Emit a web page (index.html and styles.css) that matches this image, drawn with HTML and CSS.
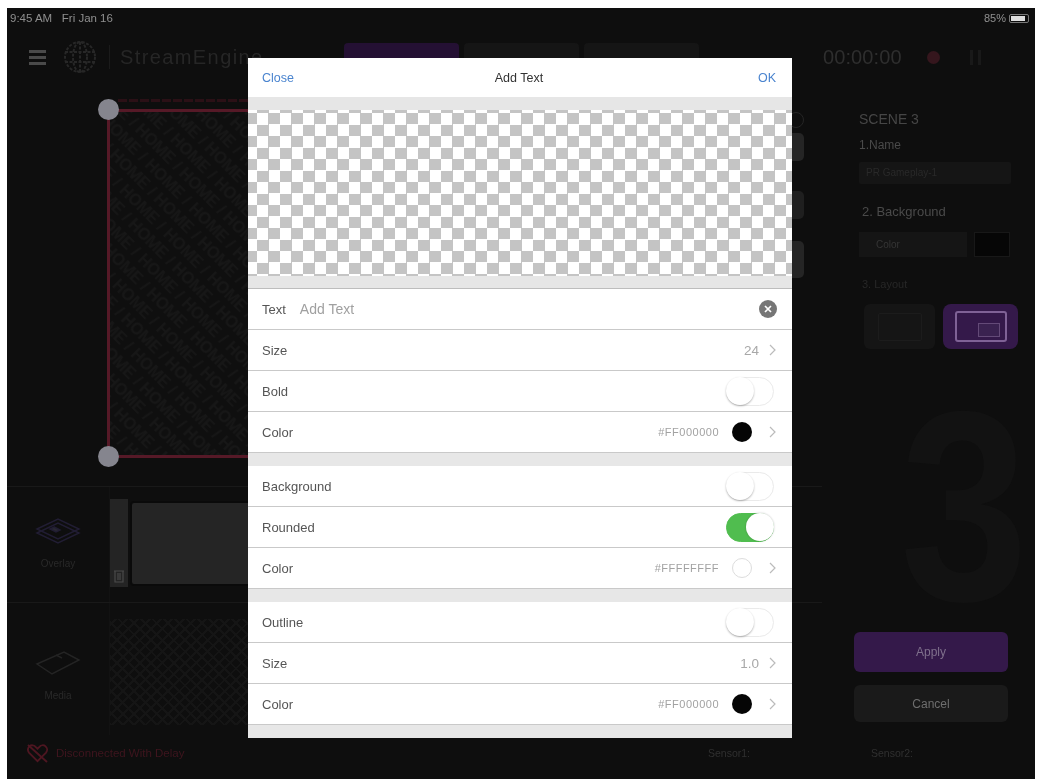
FILE: index.html
```html
<!DOCTYPE html>
<html lang="en">
<head>
<meta charset="utf-8">
<title>StreamEngine - Add Text</title>
<link rel="stylesheet" href="styles.css">
</head>
<body>
<div class="screen">
  <header class="status">
    <span>9:45 AM&nbsp;&nbsp;&nbsp;Fri Jan 16</span>
    <span class="battery">85% <i class="batt"><b></b></i></span>
  </header>

  <nav class="topbar">
    <div class="burger"><i></i><i></i><i></i></div>
    <svg class="logo" viewBox="0 0 40 34" aria-hidden="true"><g fill="none" stroke="#272727" stroke-width="2"><circle cx="20" cy="17" r="15" stroke-dasharray="3 1.5"/><ellipse cx="20" cy="17" rx="7" ry="15" stroke-dasharray="3 1.5"/><path d="M5 12h30M5 22h30M20 2v30" stroke-dasharray="3 1.5"/></g></svg>
    <span class="divider"></span>
    <span class="brand">StreamEngine</span>
    <div class="tabs">
      <span class="tab tab-on"></span>
      <span class="tab"></span>
      <span class="tab"></span>
    </div>
    <span class="timer">00:00:00</span>
    <span class="rec"></span>
    <span class="pause"><i></i><i></i></span>
  </nav>

  <div class="body">
    <main class="work">
      <section class="stage">
        <div class="canvas">
          <svg class="pattern" aria-hidden="true">
            <defs>
              <pattern id="home" width="62" height="36" patternUnits="userSpaceOnUse" patternTransform="rotate(45)">
                <text x="0" y="14" class="home-text">HOME /</text>
                <text x="-31" y="32" class="home-text">HOME / HOME</text>
              </pattern>
            </defs>
            <rect width="100%" height="100%" fill="url(#home)"/>
          </svg>
          <span class="caption"></span>
          <span class="handle handle-top"></span>
          <span class="handle handle-bottom"></span>
        </div>
        <div class="tools">
          <span class="tool-dot"></span>
          <span class="tool tool-a"></span>
          <span class="tool tool-b"></span>
          <span class="tool tool-c"></span>
        </div>
      </section>

      <section class="track">
        <div class="track-label">
          <svg class="track-icon" viewBox="0 0 48 28" aria-hidden="true"><g fill="none" stroke="#211d33" stroke-width="1.5"><path d="M3 16 24 6l21 10-21 10z"/><path d="M3 12 24 2l21 10-21 10z"/><path d="m20 10 6 3-4 2-6-3z" fill="#292932"/></g></svg>
          <span>Overlay</span>
        </div>
        <div class="strip"><svg class="trash" viewBox="0 0 12 14" aria-hidden="true"><path d="M1 2h10M2 2v11h8V2M5 4v7M7 4v7" fill="none" stroke="#4a4a4a" stroke-width="1.2"/></svg></div>
        <div class="tile"></div>
      </section>

      <section class="track track-media">
        <div class="track-label">
          <svg class="track-icon" viewBox="0 0 48 28" aria-hidden="true"><g fill="none" stroke="#242424" stroke-width="1.5"><path d="M3 15 30 3l15 8-27 14z"/><path d="m22 6 6 3"/></g></svg>
          <span>Media</span>
        </div>
        <div class="hatch"></div>
        <div class="side-panel"><span class="chev-dot"><svg viewBox="0 0 10 6" aria-hidden="true"><path d="m1 1 4 4 4-4" fill="none" stroke="#222" stroke-width="1.5"/></svg></span></div>
      </section>
    </main>

    <aside class="panel">
      <h2>SCENE 3</h2>
      <label class="lbl">1.Name</label>
      <div class="input">PR Gameplay-1</div>
      <label class="lbl lbl-bg">2. Background</label>
      <div class="bg-row">
        <div class="select">Color</div>
        <div class="swatch"></div>
      </div>
      <label class="lbl lbl-dim">3. Layout</label>
      <div class="layouts">
        <div class="layout"><span class="lay-box"></span></div>
        <div class="layout layout-on"><span class="lay-box lay-pip"><i></i></span></div>
      </div>
      <div class="big3">3</div>
      <button class="btn btn-apply">Apply</button>
      <button class="btn btn-cancel">Cancel</button>
    </aside>
  </div>

  <footer class="bottom">
    <svg class="noconn" viewBox="0 0 24 20" aria-hidden="true"><g fill="none" stroke="#4e1621" stroke-width="2"><path d="M12 18 3 9a4.5 4.5 0 0 1 7-6l2 2 2-2a4.5 4.5 0 0 1 7 6z"/><path d="M2 1l20 18"/></g></svg>
    <span class="disc">Disconnected With Delay</span>
    <span class="sensor">Sensor1:</span>
    <span class="sensor">Sensor2:</span>
  </footer>

  <div class="modal">
    <div class="m-head">
      <span class="link">Close</span>
      <span class="m-title">Add Text</span>
      <span class="link link-end">OK</span>
    </div>
    <div class="band"></div>
    <div class="checker"></div>
    <div class="band band-b"></div>

    <div class="group">
      <div class="row">
        <span class="name">Text</span><span class="placeholder">Add Text</span>
        <span class="end"><span class="clear"><svg viewBox="0 0 10 10" aria-hidden="true"><path d="m2 2 6 6M8 2 2 8" stroke="#fff" stroke-width="1.7"/></svg></span></span>
      </div>
      <div class="row"><span class="name">Size</span><span class="end"><span class="val">24</span><svg class="chev" viewBox="0 0 7 12" aria-hidden="true"><path d="m1 1 5 5-5 5" fill="none" stroke="#bbb" stroke-width="1.2"/></svg></span></div>
      <div class="row"><span class="name">Bold</span><span class="end"><span class="toggle"></span></span></div>
      <div class="row"><span class="name">Color</span><span class="end"><span class="hex">#FF000000</span><span class="dot"></span><svg class="chev" viewBox="0 0 7 12" aria-hidden="true"><path d="m1 1 5 5-5 5" fill="none" stroke="#bbb" stroke-width="1.2"/></svg></span></div>
    </div>
    <div class="gap"></div>
    <div class="group">
      <div class="row"><span class="name">Background</span><span class="end"><span class="toggle"></span></span></div>
      <div class="row"><span class="name">Rounded</span><span class="end"><span class="toggle toggle-on"></span></span></div>
      <div class="row"><span class="name">Color</span><span class="end"><span class="hex">#FFFFFFFF</span><span class="dot dot-white"></span><svg class="chev" viewBox="0 0 7 12" aria-hidden="true"><path d="m1 1 5 5-5 5" fill="none" stroke="#bbb" stroke-width="1.2"/></svg></span></div>
    </div>
    <div class="gap"></div>
    <div class="group">
      <div class="row"><span class="name">Outline</span><span class="end"><span class="toggle"></span></span></div>
      <div class="row"><span class="name">Size</span><span class="end"><span class="val">1.0</span><svg class="chev" viewBox="0 0 7 12" aria-hidden="true"><path d="m1 1 5 5-5 5" fill="none" stroke="#bbb" stroke-width="1.2"/></svg></span></div>
      <div class="row"><span class="name">Color</span><span class="end"><span class="hex">#FF000000</span><span class="dot"></span><svg class="chev" viewBox="0 0 7 12" aria-hidden="true"><path d="m1 1 5 5-5 5" fill="none" stroke="#bbb" stroke-width="1.2"/></svg></span></div>
    </div>
    <div class="gap gap-end"></div>
  </div>
</div>
</body>
</html>
```
FILE: styles.css
```css
* { box-sizing: border-box; }
html, body { margin: 0; padding: 0; background: #fff; overflow: hidden; }
body { width: 1040px; height: 782px; font-family: "Liberation Sans", Arial, sans-serif; }

.screen {
  position: relative;
  width: 1028px;
  height: 771px;
  margin: 8px 0 0 7px;
  background: #0e0e0e;
  display: flex;
  flex-direction: column;
  color: #444;
  overflow: hidden;
  filter: blur(.5px);
}

/* status bar */
.status {
  flex: none;
  height: 20px;
  padding: 0 6px 0 3px;
  display: flex;
  justify-content: space-between;
  align-items: center;
  font-size: 11.5px;
  color: #8f8f8f;
}
.battery { display: flex; align-items: center; gap: 3px; font-size: 11px; }
.batt { width: 20px; height: 9px; border: 1px solid #777; border-radius: 2px; padding: 1px; display: block; }
.batt b { display: block; width: 85%; height: 100%; background: #ddd; }

/* top bar */
.topbar {
  flex: none;
  height: 58px;
  padding-left: 22px;
  display: flex;
  align-items: center;
}
.burger { width: 17px; display: flex; flex-direction: column; gap: 3px; }
.burger i { display: block; height: 3px; background: #4a4a4a; }
.logo { width: 40px; height: 34px; margin-left: 14px; }
.divider { width: 1px; height: 24px; margin-left: 9px; background: #1b1b1b; }
.brand { width: 224px; margin-left: 10px; font-size: 20px; letter-spacing: 1.4px; color: #262626; white-space: nowrap; }
.tabs { display: flex; gap: 5px; width: 364px; }
.tab { width: 115px; height: 28px; background: #151515; border-radius: 4px 4px 0 0; }
.tab-on { background: #241033; }
.timer { margin-left: 115px; font-size: 20px; color: #2e2e2e; letter-spacing: .1px; }
.rec { width: 13px; height: 13px; margin-left: 25px; border-radius: 50%; background: #35161d; }
.pause { display: flex; gap: 5px; margin-left: 30px; }
.pause i { display: block; width: 3px; height: 15px; background: #191919; }

/* body */
.body { flex: 1; min-height: 0; display: flex; }
.work { flex: none; width: 815px; display: flex; flex-direction: column; }

.stage {
  flex: none;
  height: 401px;
  padding: 23px 0 0 100px;
  display: flex;
  border-bottom: 1px solid #191919;
}
.canvas {
  position: relative;
  flex: none;
  width: 680px;
  height: 349px;
  border: 3px solid #561927;
  background: #0f0f0f;
}
.pattern { position: absolute; inset: 0; width: 100%; height: 100%; }
.home-text { font: 700 16px "Liberation Sans", Arial, sans-serif; fill: #171717; }
.caption {
  position: absolute;
  left: 8px;
  top: -13px;
  width: 130px;
  height: 3px;
  background: repeating-linear-gradient(90deg, #2b1016 0 9px, transparent 9px 11px);
}
.handle {
  position: absolute;
  left: -12px;
  width: 21px;
  height: 21px;
  border-radius: 50%;
  background: #85858e;
}
.handle-top { top: -13px; }
.handle-bottom { bottom: -12px; }

.tools { flex: none; width: 14px; margin-left: 5px; display: flex; flex-direction: column; align-items: flex-start; }
.tool-dot { width: 16px; height: 16px; margin: 3px 0 5px -4px; border: 1px solid #252525; border-radius: 50%; }
.tool { display: block; width: 12px; background: #252525; border-radius: 0 5px 5px 0; }
.tool-a { height: 28px; margin-bottom: 30px; }
.tool-b { height: 28px; margin-bottom: 22px; background: #1f1f1f; }
.tool-c { height: 37px; }

.track {
  flex: none;
  height: 116px;
  display: flex;
  align-items: flex-start;
  border-bottom: 1px solid #191919;
}
.track-label {
  flex: none;
  width: 103px;
  height: 100%;
  display: flex;
  flex-direction: column;
  align-items: center;
  padding: 30px 0 0 0;
  font-size: 10px;
  color: #292929;
  gap: 13px;
  border-right: 1px solid #121212;
}
.track-icon { width: 48px; height: 28px; }
.strip { flex: none; width: 18px; height: 88px; margin: 12px 0 0 0; background: #242424; position: relative; }
.trash { position: absolute; left: 3px; bottom: 4px; width: 12px; height: 14px; }
.tile { flex: none; width: 400px; height: 85px; margin: 14px 0 0 2px; background: #252525; border: 2px solid #0a0a0a; border-radius: 4px; }

.track-media { height: 132px; border-bottom: 0; }
.track-media .track-label { padding-top: 46px; }
.hatch {
  flex: none;
  width: 580px;
  height: 106px;
  margin: 16px 0 0 0;
  background:
    repeating-linear-gradient(45deg, #151515 0 2px, transparent 2px 8px),
    repeating-linear-gradient(-45deg, #151515 0 2px, transparent 2px 8px);
}
.side-panel {
  flex: none;
  width: 30px;
  height: 102px;
  margin: 16px 0 0 2px;
  padding: 10px 0 0 6px;
  background: #090909;
}
.chev-dot { width: 16px; height: 16px; border-radius: 50%; background: #626262; display: flex; align-items: center; justify-content: center; }
.chev-dot svg { width: 9px; height: 6px; }

/* right panel */
.panel {
  flex: none;
  width: 213px;
  position: relative;
  padding: 25px 0 0 37px;
  display: flex;
  flex-direction: column;
  align-items: flex-start;
}
.panel h2 { margin: 0; font-size: 14px; font-weight: 400; line-height: 16px; color: #464646; }
.lbl { display: block; font-size: 12px; line-height: 14px; margin-top: 11px; color: #4a4a4a; }
.lbl-bg { margin: 21px 0 0 3px; font-size: 13px; }
.lbl-dim { margin: 20px 0 0 3px; font-size: 11px; color: #272727; }
.input { width: 152px; height: 22px; margin-top: 10px; background: #151515; border-radius: 2px; font-size: 10px; line-height: 22px; padding-left: 7px; color: #292929; }
.bg-row { display: flex; gap: 7px; margin: 13px 0 0 0; }
.select { width: 108px; height: 25px; background: #151515; font-size: 10px; line-height: 25px; padding-left: 17px; color: #353535; }
.swatch { width: 36px; height: 25px; background: #060606; border: 1px solid #181818; }
.layouts { display: flex; gap: 8px; margin: 13px 0 0 5px; }
.layout { width: 71px; height: 45px; background: #151515; border-radius: 6px; display: flex; align-items: center; justify-content: center; }
.layout-on { width: 75px; background: #34194a; border-radius: 8px; }
.lay-box { display: block; position: relative; width: 44px; height: 28px; border: 1.5px solid #1c1c1c; border-radius: 2px; }
.lay-pip { width: 52px; height: 31px; border: 2px solid #7f6296; border-radius: 3px; }
.lay-pip i { position: absolute; right: 5px; bottom: 3px; width: 22px; height: 14px; border: 1.5px solid #644a78; background: #3a2250; }
.big3 {
  position: absolute;
  left: 78px;
  top: 325px;
  font-size: 271px;
  font-weight: 700;
  line-height: 190px;
  color: #121212;
  transform: scaleX(.85);
  transform-origin: left top;
}
.btn { position: absolute; left: 32px; width: 154px; border: 0; border-radius: 6px; font: 12px "Liberation Sans", Arial, sans-serif; }
.btn-apply { top: 546px; height: 40px; background: #34194a; color: #7f708c; }
.btn-cancel { top: 599px; height: 37px; background: #1a1a1a; color: #6e6e6e; }

/* bottom bar */
.bottom {
  position: absolute;
  left: 0;
  right: 0;
  bottom: 0;
  height: 52px;
  display: flex;
  align-items: center;
  padding: 0 0 0 19px;
  font-size: 10.5px;
  color: #303030;
}
.noconn { width: 23px; height: 19px; }
.disc { width: 652px; margin-left: 7px; font-size: 11.5px; color: #3f151e; white-space: nowrap; }
.sensor { width: 163px; }

/* modal */
.modal {
  position: absolute;
  left: 241px;
  top: 50px;
  width: 544px;
  height: 680px;
  background: #e7e7e7;
  display: flex;
  flex-direction: column;
  color: #444;
  z-index: 5;
}
.m-head {
  flex: none;
  height: 39px;
  padding: 0 16px 0 14px;
  background: #fff;
  display: grid;
  grid-template-columns: 1fr auto 1fr;
  align-items: center;
  font-size: 12.5px;
}
.link { color: #4a84cf; }
.link-end { justify-self: end; }
.m-title { color: #333; }
.band { flex: none; height: 13px; background: #e6e6e6; }
.band-b { height: 13px; border-bottom: 1px solid #bdbdbd; }
.checker {
  flex: none;
  height: 166px;
  background-color: #fff;
  background-image: conic-gradient(#c4c4c4 25%, transparent 0 50%, #c4c4c4 0 75%, transparent 0);
  background-size: 23px 23px;
  background-position: 9px 3px;
}
.group { flex: none; background: #fff; }
.row {
  height: 41px;
  padding: 0 16px 0 14px;
  display: flex;
  align-items: center;
  border-bottom: 1.5px solid #c9c9c9;
  font-size: 13px;
}
.name { color: #555; }
.placeholder { margin-left: 14px; font-size: 14px; color: #a0a0a0; }
.end { margin-left: auto; display: flex; align-items: center; }
.clear { width: 18px; height: 18px; margin-right: -1px; border-radius: 50%; background: #767676; display: flex; align-items: center; justify-content: center; }
.clear svg { width: 10px; height: 10px; }
.val { font-size: 13.5px; color: #a8a8a8; }
.chev { width: 7px; height: 12px; margin-left: 10px; }
.hex { font-size: 11px; letter-spacing: .5px; color: #a2a2a2; }
.dot { width: 20px; height: 20px; margin: 0 7px 0 13px; border-radius: 50%; background: #050505; }
.dot-white { background: #fff; border: 1.5px solid #ddd; }
.toggle {
  position: relative;
  display: block;
  width: 48px;
  height: 29px;
  border: 1.5px solid #eaeaea;
  border-radius: 15px;
  background: #fff;
  margin-right: 2px;
}
.toggle::after {
  content: "";
  position: absolute;
  left: -1px;
  top: -1px;
  width: 28px;
  height: 28px;
  border-radius: 50%;
  background: #fff;
  box-shadow: 0 1px 2px rgba(0,0,0,.3);
}
.toggle-on { background: #50bd4f; border-color: #50bd4f; }
.toggle-on::after { left: auto; right: -1px; box-shadow: 0 0 2px rgba(0,0,0,.25); }
.gap { flex: none; height: 13px; background: #e7e7e7; }
.gap-end { flex: 1; }
```
